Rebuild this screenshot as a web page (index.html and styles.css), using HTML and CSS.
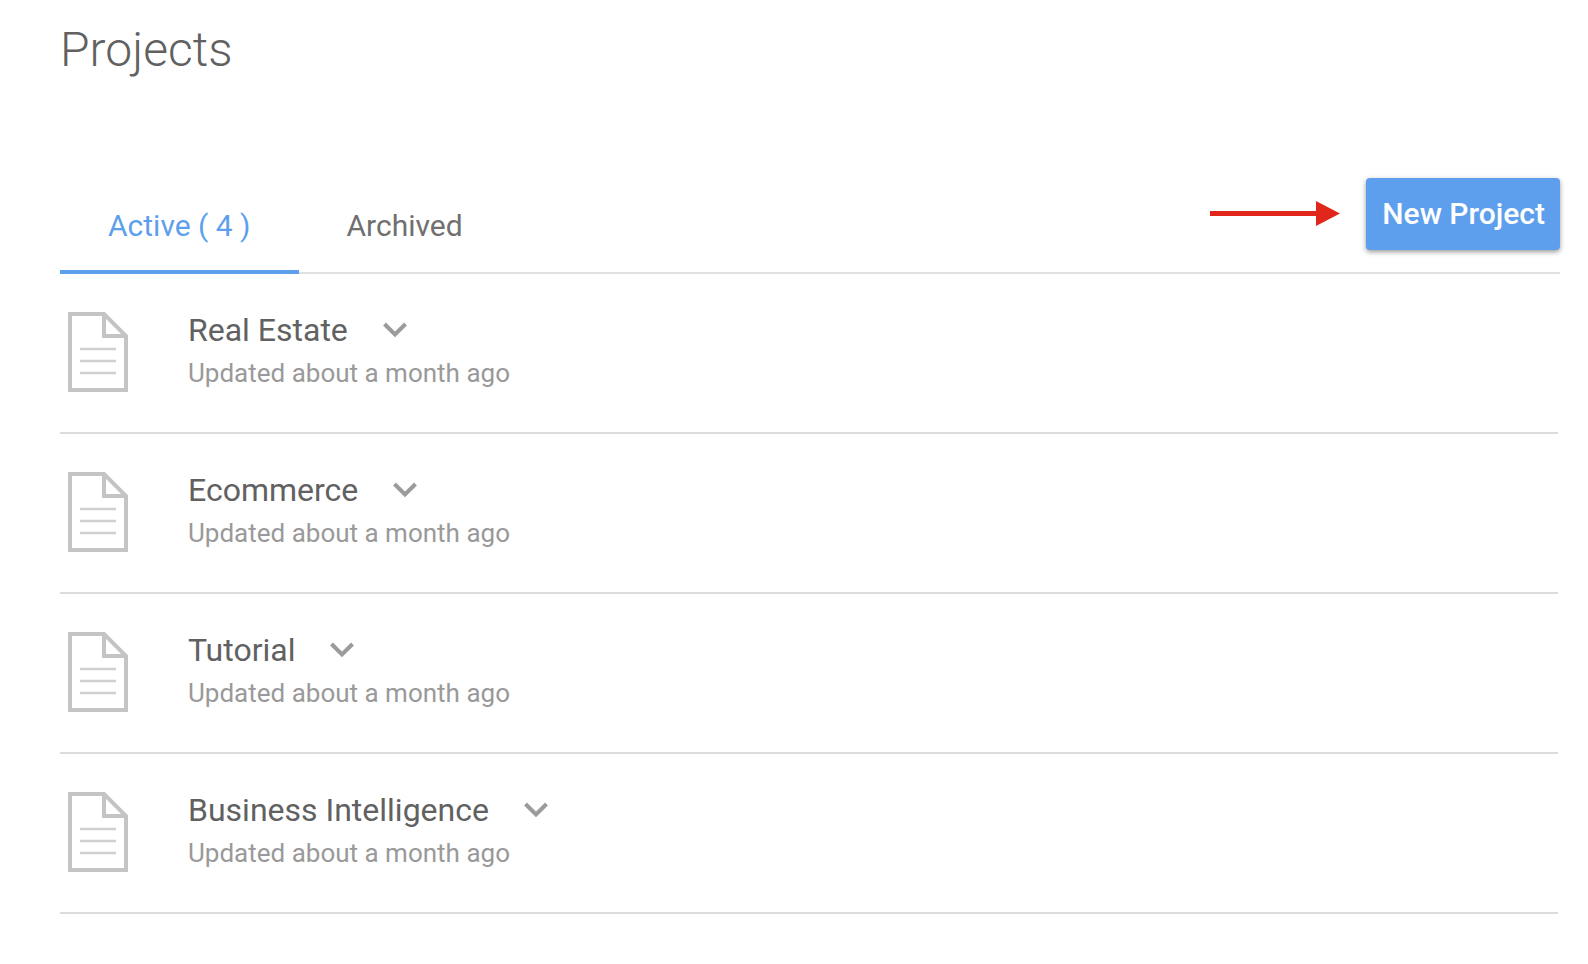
FILE: index.html
```html
<!DOCTYPE html>
<html lang="en">
<head>
    <meta charset="UTF-8">
    <title>Projects</title>
    <link rel="stylesheet" href="styles.css">
</head>
<body>
<svg class="sprite" aria-hidden="true">
    <symbol id="doc" viewBox="0 0 60 80">
        <path d="M2 2H36L58 24V78H2Z" fill="#fff" stroke="#c4c4c4" stroke-width="4"/>
        <path d="M36 2V24H58" fill="none" stroke="#c4c4c4" stroke-width="4"/>
        <path d="M12 37H48M12 49H48M12 61H48" fill="none" stroke="#d0d0d0" stroke-width="2.5"/>
    </symbol>
    <symbol id="chevron" viewBox="0 0 24 16">
        <path d="M1.5 2L12 12.5L22.5 2" fill="none" stroke="#9b9b9b" stroke-width="4"/>
    </symbol>
</svg>
<main class="page">
    <h1 class="title">Projects</h1>
    <div class="header">
        <nav class="tabs">
            <a class="tab active" href="#active">Active ( 4 )</a>
            <a class="tab" href="#archived">Archived</a>
        </nav>
        <div class="actions">
            <svg class="arrow" viewBox="0 0 130 26" aria-hidden="true">
                <path d="M0 10H106V0L130 12.5L106 25V15H0Z" fill="#e1261c"/>
            </svg>
            <button class="new-project" type="button">New Project</button>
        </div>
    </div>
    <ul class="list" id="active">
        <li class="project">
            <svg class="doc" aria-hidden="true"><use href="#doc"/></svg>
            <div class="info">
                <div class="name-row">
                    <a class="name" href="#real-estate">Real Estate</a>
                    <button class="more" type="button" aria-label="Real Estate menu"><svg class="chevron"><use href="#chevron"/></svg></button>
                </div>
                <p class="updated">Updated about a month ago</p>
            </div>
        </li>
        <li class="project">
            <svg class="doc" aria-hidden="true"><use href="#doc"/></svg>
            <div class="info">
                <div class="name-row">
                    <a class="name" href="#ecommerce">Ecommerce</a>
                    <button class="more" type="button" aria-label="Ecommerce menu"><svg class="chevron"><use href="#chevron"/></svg></button>
                </div>
                <p class="updated">Updated about a month ago</p>
            </div>
        </li>
        <li class="project">
            <svg class="doc" aria-hidden="true"><use href="#doc"/></svg>
            <div class="info">
                <div class="name-row">
                    <a class="name" href="#tutorial">Tutorial</a>
                    <button class="more" type="button" aria-label="Tutorial menu"><svg class="chevron"><use href="#chevron"/></svg></button>
                </div>
                <p class="updated">Updated about a month ago</p>
            </div>
        </li>
        <li class="project">
            <svg class="doc" aria-hidden="true"><use href="#doc"/></svg>
            <div class="info">
                <div class="name-row">
                    <a class="name" href="#business-intelligence">Business Intelligence</a>
                    <button class="more" type="button" aria-label="Business Intelligence menu"><svg class="chevron"><use href="#chevron"/></svg></button>
                </div>
                <p class="updated">Updated about a month ago</p>
            </div>
        </li>
    </ul>
</main>
</body>
</html>
```
FILE: styles.css
```css
* {
    box-sizing: border-box;
}
body {
    margin: 0;
    background: #fff;
    color: #616161;
    font-family: Roboto, sans-serif;
}
a {
    color: inherit;
    text-decoration: none;
}
button {
    border: none;
    font-family: inherit;
    cursor: pointer;
}
.sprite {
    display: none;
}
.page {
    padding: 20px 28px 0 60px;
}
.title {
    margin: 0;
    font-size: 48px;
    font-weight: 300;
    line-height: 60px;
}
.header {
    display: flex;
    justify-content: space-between;
    margin-top: 98px;
    border-bottom: 2px solid #e0e0e0;
}
.tabs {
    display: flex;
    /* the active line covers the grey one */
    margin-bottom: -2px;
}
.tab {
    height: 96px;
    padding: 30px 48px 0;
    border-bottom: 4px solid transparent;
    color: #707070;
    font-size: 30px;
    line-height: 36px;
}
.tab.active {
    border-color: #5e9fed;
    color: #5e9fed;
}
.actions {
    display: flex;
    align-items: center;
    align-self: flex-start;
    gap: 26px;
}
.arrow {
    width: 130px;
    height: 26px;
}
.new-project {
    height: 72px;
    padding: 0 15px 2px 16px;
    border-radius: 4px;
    background: #5e9fed;
    box-shadow: 0 2px 5px rgba(0, 0, 0, 0.4);
    color: #fff;
    font-size: 30px;
    font-weight: 500;
}
.list {
    margin: 0 2px 0 0;
    padding: 0;
    list-style: none;
}
.project {
    display: flex;
    gap: 60px;
    height: 160px;
    padding: 38px 8px 0;
    border-bottom: 2px solid #dcdcdc;
}
.doc {
    width: 60px;
    height: 80px;
}
.name-row {
    display: flex;
    align-items: center;
    gap: 35px;
}
.name {
    font-size: 32px;
    line-height: 36px;
}
.more {
    display: flex;
    padding: 0;
    background: none;
}
.chevron {
    width: 24px;
    height: 16px;
}
.updated {
    margin: 8px 0 0;
    color: #999;
    font-size: 26px;
    line-height: 34px;
}
```
